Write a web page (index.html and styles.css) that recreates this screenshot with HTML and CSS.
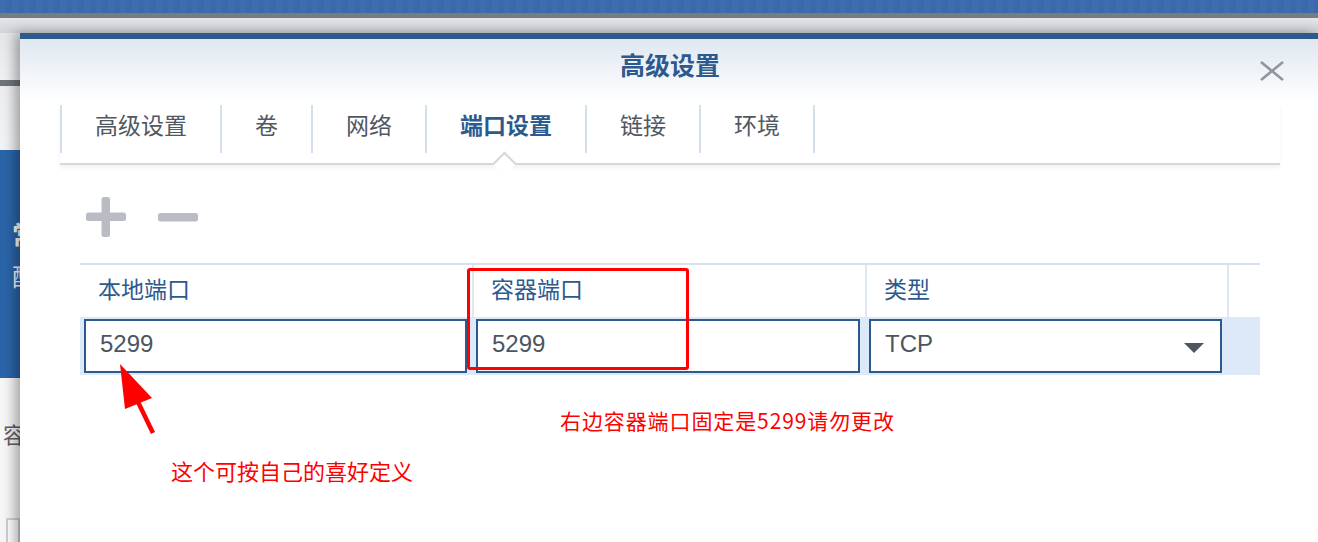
FILE: index.html
```html
<!DOCTYPE html>
<html lang="zh-CN">
<head>
<meta charset="utf-8">
<title>高级设置</title>
<link rel="stylesheet" href="styles.css">
</head>
<body>
<div class="app">
  <div class="app-top"></div>
  <div class="app-sep"></div>
  <div class="app-bar"></div>
  <aside class="side">
    <div class="side-a"></div>
    <div class="side-rule"></div>
    <div class="side-b"></div>
    <div class="side-blue"><span class="side-t1">常</span><span class="side-t2">配</span></div>
    <div class="side-c"><span class="side-t3">容</span><div class="side-box"></div></div>
  </aside>
</div>

<section class="modal">
  <header class="modal-head">
    <h1 class="modal-title">高级设置</h1>
    <button class="modal-close" aria-label="关闭">
      <svg width="24" height="20" viewBox="0 0 24 20"><path d="M1 1 L23 19 M23 1 L1 19" stroke="#90969d" stroke-width="2.6" fill="none"/></svg>
    </button>
  </header>

  <nav class="tabs">
    <div class="tab">高级设置</div>
    <div class="tab">卷</div>
    <div class="tab">网络</div>
    <div class="tab active">端口设置</div>
    <div class="tab">链接</div>
    <div class="tab last">环境</div>
  </nav>

  <div class="toolbar">
    <svg class="tool" width="40" height="40" viewBox="0 0 40 40"><rect x="0" y="15.5" width="40" height="8.5" rx="2.5" fill="#b9bdc3"/><rect x="15.5" y="0" width="8.5" height="40" rx="2.5" fill="#b9bdc3"/></svg>
    <svg class="tool" width="40" height="9" viewBox="0 0 40 9"><rect x="0" y="0" width="40" height="8.5" rx="2.5" fill="#b9bdc3"/></svg>
  </div>

  <div class="ports">
    <div class="ports-row ports-head">
      <div class="cell">本地端口</div>
      <div class="cell">容器端口</div>
      <div class="cell">类型</div>
      <div class="cell"></div>
    </div>
    <div class="ports-row ports-body">
      <div class="cell"><div class="field">5299</div></div>
      <div class="cell"><div class="field">5299</div></div>
      <div class="cell"><div class="field select">TCP<span class="caret"></span></div></div>
      <div class="cell"></div>
    </div>
  </div>

  <div class="mark-box"></div>
  <svg class="mark-arrow" width="50" height="80" viewBox="0 0 50 80">
    <polygon points="10,4 15,49 42,38" fill="#ff0000"/>
    <line x1="28" y1="42" x2="43" y2="73" stroke="#ff0000" stroke-width="4.5"/>
  </svg>
  <p class="note note-right">右边容器端口固定是5299请勿更改</p>
  <p class="note note-left">这个可按自己的喜好定义</p>
</section>
</body>
</html>
```

FILE: styles.css
```css
html, body {
  margin: 0;
  padding: 0;
}
body {
  width: 1318px;
  height: 542px;
  overflow: hidden;
  position: relative;
  background: #f6f6f6;
  font-family: "Liberation Sans", "Noto Sans CJK SC", sans-serif;
}

/* background application */
.app-top {
  height: 13px;
  background: repeating-linear-gradient(90deg, #3d6eb0 0 6px, #3a6aac 6px 12px);
}
.app-sep {
  height: 5px;
  background: #777c84;
}
.app-bar {
  height: 15px;
  background: linear-gradient(#e3e5e8, #d2d5d9);
}
.side {
  width: 20px;
  height: 509px;
  display: flex;
  flex-direction: column;
  overflow: hidden;
}
.side > div {
  flex-shrink: 0;
}
.side-a {
  height: 47px;
  background: linear-gradient(#e5e7ea, #f1f2f3);
}
.side-rule {
  height: 6px;
  background: #6f747b;
}
.side-b {
  height: 64px;
  background: linear-gradient(#eceef0, #f3f4f5);
}
.side-blue {
  height: 228px;
  background: #2b65a9;
  color: #ffffff;
  display: flex;
  flex-direction: column;
  padding-left: 12px;
  box-sizing: border-box;
  font-family: "Noto Sans CJK SC", sans-serif;
}
.side-t1 {
  margin-top: 66px;
  font-size: 26px;
  font-weight: bold;
  line-height: 36px;
}
.side-t2 {
  margin-top: 8px;
  font-size: 24px;
  line-height: 32px;
}
.side-c {
  flex: 1 0 auto;
  background: #f7f7f7;
  display: flex;
  flex-direction: column;
  padding-left: 3px;
}
.side-t3 {
  margin-top: 40px;
  font-size: 22px;
  line-height: 30px;
  color: #5b616a;
  font-family: "Noto Sans CJK SC", sans-serif;
}
.side-box {
  margin: 70px 0 0 3px;
  height: 30px;
  border: 2px solid #cdd1d6;
  background: #fff;
}

/* modal dialog (overlay) */
.modal {
  position: absolute;
  left: 20px;
  top: 33px;
  width: 1300px;
  height: 520px;
  background: #ffffff;
  border-top: 6px solid #2c5a8c;
  box-shadow: -5px 0 12px rgba(0, 0, 0, 0.35);
}
.modal-head {
  height: 66px;
  background: linear-gradient(#e0e7f0, #ffffff 62px);
  position: relative;
}
.modal-title {
  margin: 0;
  padding-top: 12px;
  text-align: center;
  font-size: 25px;
  line-height: 30px;
  font-weight: bold;
  color: #2d5a8e;
  font-family: "Liberation Sans", "Noto Sans CJK SC", sans-serif;
}
.modal-close {
  position: absolute;
  right: 36px;
  top: 22px;
  width: 24px;
  height: 20px;
  padding: 0;
  border: 0;
  background: transparent;
}
.modal-close svg {
  display: block;
}

/* tabs */
.tabs {
  margin: 0 40px;
  height: 58px;
  display: flex;
  align-items: flex-start;
  border-bottom: 2px solid #d7d7d7;
  box-shadow: 0 3px 4px rgba(0, 0, 0, 0.05);
}
.tab {
  position: relative;
  height: 48px;
  line-height: 42px;
  padding: 0 33px;
  border-left: 2px solid #d3dfec;
  font-size: 23px;
  color: #505862;
}
.tab.last {
  border-right: 2px solid #d3dfec;
}
.tab.active {
  font-weight: bold;
  color: #2d5a8e;
}
.tab.active::after {
  content: "";
  position: absolute;
  left: calc(50% - 10px);
  top: 50px;
  width: 17px;
  height: 17px;
  box-sizing: border-box;
  background: #ffffff;
  border-top: 2px solid #d7d7d7;
  border-left: 2px solid #d7d7d7;
  transform: rotate(45deg);
}

/* toolbar */
.toolbar {
  margin: 32px 0 0 66px;
  height: 40px;
  display: flex;
  align-items: center;
  gap: 32px;
}
.tool {
  display: block;
}

/* ports table */
.ports {
  margin: 26px 0 0 60px;
  width: 1180px;
  border-top: 2px solid #d6e2ee;
}
.ports-row {
  display: grid;
  grid-template-columns: 392px 393px 362px 33px;
}
.ports-head .cell {
  height: 52px;
  padding: 0 0 7px 18px;
  box-sizing: border-box;
  display: flex;
  align-items: center;
  font-size: 23px;
  color: #2d5a8e;
}
.ports-head .cell + .cell {
  border-left: 2px solid #dfe8f2;
  padding-left: 17px;
}
.ports-body {
  background: #dde9f8;
  padding: 2px 0;
}
.ports-body .cell {
  padding: 0 5px 0 4px;
}
.field {
  height: 54px;
  box-sizing: border-box;
  border: 2px solid #2c5a8e;
  background: #ffffff;
  display: flex;
  align-items: center;
  padding: 0 14px 5px;
  font-size: 24px;
  color: #4d555f;
}
.select {
  padding-right: 16px;
}
.caret {
  margin-left: auto;
  margin-top: 9px;
  width: 0;
  height: 0;
  border-left: 10px solid transparent;
  border-right: 10px solid transparent;
  border-top: 10px solid #4e5660;
}

/* red annotations drawn over the screenshot (offsets relative to the modal's padding box) */
.mark-box {
  position: absolute;
  left: 447px;
  top: 229px;
  width: 222px;
  height: 102px;
  box-sizing: border-box;
  border: 3px solid #ff0000;
  border-radius: 3px;
}
.mark-arrow {
  position: absolute;
  left: 90px;
  top: 321px;
}
.note {
  position: absolute;
  margin: 0;
  color: #ff0000;
  font-family: "Noto Sans CJK SC", sans-serif;
  white-space: nowrap;
}
.note-right {
  left: 540px;
  top: 367px;
  font-size: 21px;
  line-height: 28px;
  letter-spacing: 0.9px;
}
.note-left {
  left: 151px;
  top: 416px;
  font-size: 22px;
  line-height: 30px;
}
```
